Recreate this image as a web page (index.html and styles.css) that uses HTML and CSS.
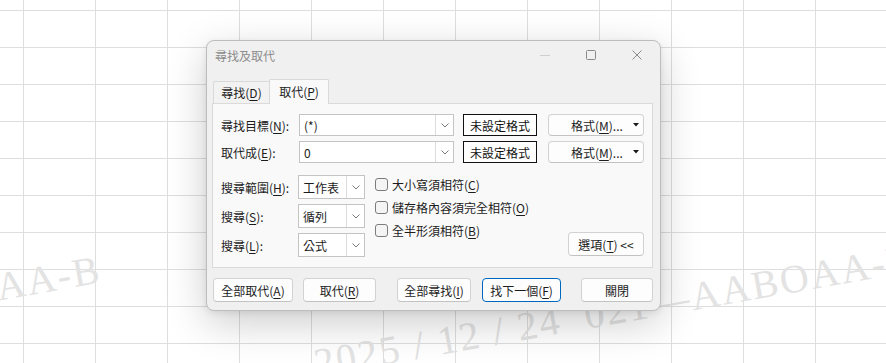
FILE: index.html
```html
<!DOCTYPE html>
<html lang="zh-Hant">
<head>
  <meta charset="utf-8">
  <title>尋找及取代</title>
  <link rel="stylesheet" href="styles.css">
</head>
<body>
  <div class="watermark">
    <span class="wm wm-left">AA-B</span>
    <span class="wm wm-main">2025 / 12 / 24&nbsp;&nbsp;021—AABOAA-B</span>
  </div>

  <div class="dialog">
    <div class="titlebar">
      <span class="title">尋找及取代</span>
      <div class="caption">
        <div class="cap"><svg width="10" height="10" viewBox="0 0 10 10"><path d="M0 5.5H10" stroke="#cfcfcf" stroke-width="1"/></svg></div>
        <div class="cap"><svg width="10" height="10" viewBox="0 0 10 10"><rect x="0.5" y="0.5" width="9" height="9" rx="1" fill="none" stroke="#8a8a8a" stroke-width="1"/></svg></div>
        <div class="cap"><svg width="10" height="10" viewBox="0 0 10 10"><path d="M0.5 0.5L9.5 9.5M9.5 0.5L0.5 9.5" stroke="#8a8a8a" stroke-width="1"/></svg></div>
      </div>
    </div>

    <div class="tabs">
      <div class="tab">尋找(<u>D</u>)</div>
      <div class="tab active">取代(<u>P</u>)</div>
    </div>

    <div class="panel">
      <div class="find-row">
        <span class="lbl">尋找目標(<u>N</u>):</span>
        <div class="combo"><span class="val">(*)</span><span class="drop"><svg width="8" height="5" viewBox="0 0 8 5"><path d="M0.5 0.5L4 4L7.5 0.5" fill="none" stroke="#7a7a7a"/></svg></span></div>
        <div class="preview">未設定格式</div>
        <button class="btn fmt-btn"><span>格式(<u>M</u>)...</span><svg width="6" height="4" viewBox="0 0 6 4"><path d="M0 0H6L3 3.5Z" fill="#1a1a1a"/></svg></button>
      </div>
      <div class="find-row">
        <span class="lbl">取代成(<u>E</u>):</span>
        <div class="combo"><span class="val">0</span><span class="drop"><svg width="8" height="5" viewBox="0 0 8 5"><path d="M0.5 0.5L4 4L7.5 0.5" fill="none" stroke="#7a7a7a"/></svg></span></div>
        <div class="preview">未設定格式</div>
        <button class="btn fmt-btn"><span>格式(<u>M</u>)...</span><svg width="6" height="4" viewBox="0 0 6 4"><path d="M0 0H6L3 3.5Z" fill="#1a1a1a"/></svg></button>
      </div>

      <div class="options">
        <div class="sel-col">
          <div class="sel-row">
            <span class="sel-lbl">搜尋範圍(<u>H</u>):</span>
            <div class="select"><span class="val">工作表</span><span class="drop"><svg width="8" height="5" viewBox="0 0 8 5"><path d="M0.5 0.5L4 4L7.5 0.5" fill="none" stroke="#7a7a7a"/></svg></span></div>
          </div>
          <div class="sel-row">
            <span class="sel-lbl">搜尋(<u>S</u>):</span>
            <div class="select"><span class="val">循列</span><span class="drop"><svg width="8" height="5" viewBox="0 0 8 5"><path d="M0.5 0.5L4 4L7.5 0.5" fill="none" stroke="#7a7a7a"/></svg></span></div>
          </div>
          <div class="sel-row">
            <span class="sel-lbl">搜尋(<u>L</u>):</span>
            <div class="select"><span class="val">公式</span><span class="drop"><svg width="8" height="5" viewBox="0 0 8 5"><path d="M0.5 0.5L4 4L7.5 0.5" fill="none" stroke="#7a7a7a"/></svg></span></div>
          </div>
        </div>

        <div class="check-col">
          <label class="check"><span class="box"></span>大小寫須相符(<u>C</u>)</label>
          <label class="check"><span class="box"></span>儲存格內容須完全相符(<u>O</u>)</label>
          <label class="check"><span class="box"></span>全半形須相符(<u>B</u>)</label>
        </div>

        <button class="btn opt-btn">選項(<u>T</u>) &lt;&lt;</button>
      </div>
    </div>

    <div class="actions">
      <button class="btn">全部取代(<u>A</u>)</button>
      <button class="btn">取代(<u>R</u>)</button>
      <button class="btn">全部尋找(<u>I</u>)</button>
      <button class="btn primary">找下一個(<u>F</u>)</button>
      <button class="btn">關閉</button>
    </div>
  </div>
</body>
</html>
```

FILE: styles.css
```css
body { margin:0; padding:40px 0 0 206px; width:886px; height:363px; box-sizing:border-box; overflow:hidden; position:relative;
  background-color:#fff;
  background-image:linear-gradient(to right, #dedede 1px, transparent 1px), linear-gradient(to bottom, #dedede 1px, transparent 1px);
  background-size:72px 37px; background-position:23px 10px;
  font-family:"Noto Sans CJK TC", sans-serif; font-size:12px; color:#1c1c1c; }
u { text-underline-offset:2px; }

.watermark { position:absolute; left:0; top:0; width:886px; height:363px; overflow:hidden; }
.wm { position:absolute; font-family:"Liberation Serif", serif; font-size:40px; line-height:1; letter-spacing:2px; color:#e3e3e3; white-space:nowrap; transform-origin:0 0; transform:rotate(-10deg); }
.wm-left { left:-7px; top:268px; }
.wm-main { left:311px; top:344px; }

.dialog { position:relative; z-index:1; width:455px; height:271px; box-sizing:border-box; background:#f0f0f0; border:1px solid #bdbdbd; border-radius:8px; box-shadow:0 12px 40px rgba(0,0,0,0.2), 0 2px 6px rgba(0,0,0,0.08); }

.titlebar { display:flex; align-items:center; height:28px; }
.title { padding-left:8px; color:#8c8c8c; }
.caption { margin-left:auto; display:flex; height:28px; }
.cap { width:46px; display:flex; align-items:center; justify-content:center; }
.cap svg { display:block; }

.tabs { display:flex; align-items:flex-end; height:24px; margin-top:10px; padding-left:6px; }
.tab { box-sizing:border-box; height:22px; width:56px; display:flex; align-items:center; justify-content:center; background:#f2f2f2; border:1px solid #d9d9d9; border-right:none; border-bottom:none; border-radius:2px 0 0 0; }
.tab.active { position:relative; z-index:2; height:25px; width:60px; margin-bottom:-1px; background:#f9f9f9; border-right:1px solid #d9d9d9; border-radius:2px 2px 0 0; padding-bottom:2px; }

.panel { box-sizing:border-box; margin-left:5px; width:441px; height:165px; background:#f9f9f9; border:1px solid #dadada; padding:10px 8px; }

.find-row { display:flex; align-items:center; height:22px; }
.find-row + .find-row { margin-top:5px; }
.lbl { width:78px; }

.combo, .select { box-sizing:border-box; display:flex; align-items:center; background:#fff; border:1px solid #c4c4c4; }
.combo { width:155px; height:22px; }
.select { width:67px; height:24px; }
.val { flex:1; padding-left:4px; }
.drop { align-self:stretch; width:17px; display:flex; align-items:center; justify-content:center; border-left:1px solid #dcdcdc; }
.drop svg { display:block; }

.preview { box-sizing:border-box; margin-left:9px; width:74px; height:22px; display:flex; align-items:center; justify-content:center; border:1px solid #111; background:#fff; color:#111; }

.btn { box-sizing:border-box; height:24px; padding:0; font:inherit; color:#1c1c1c; background:#fdfdfd; border:1px solid #d2d2d2; border-bottom-color:#c2c2c2; border-radius:4px; display:flex; align-items:center; justify-content:center; }
.fmt-btn { margin-left:11px; width:96px; height:22px; justify-content:flex-start; padding:0 4px 0 22px; }
.fmt-btn svg { margin-left:auto; display:block; }

.options { display:flex; margin-top:12px; height:82px; }
.sel-col { display:flex; flex-direction:column; gap:5px; }
.sel-row { display:flex; align-items:center; height:24px; }
.sel-lbl { width:77px; }

.check-col { display:flex; flex-direction:column; gap:4px; margin-left:10px; }
.check { display:flex; align-items:center; height:19px; }
.box { box-sizing:border-box; width:13px; height:13px; margin-right:4px; border:1px solid #7c7c7c; border-radius:3px; background:#f4f4f4; }

.opt-btn { margin-left:auto; align-self:flex-end; margin-bottom:1px; width:76px; }

.actions { display:flex; margin-top:10px; padding-left:6px; }
.actions .btn:nth-child(1) { width:80px; }
.actions .btn:nth-child(2) { width:73px; margin-left:10px; }
.actions .btn:nth-child(3) { width:74px; margin-left:21px; }
.actions .btn:nth-child(4) { width:79px; margin-left:11px; }
.actions .btn:nth-child(5) { width:72px; margin-left:20px; }
.btn.primary { border:1px solid #0067c0; }
```
